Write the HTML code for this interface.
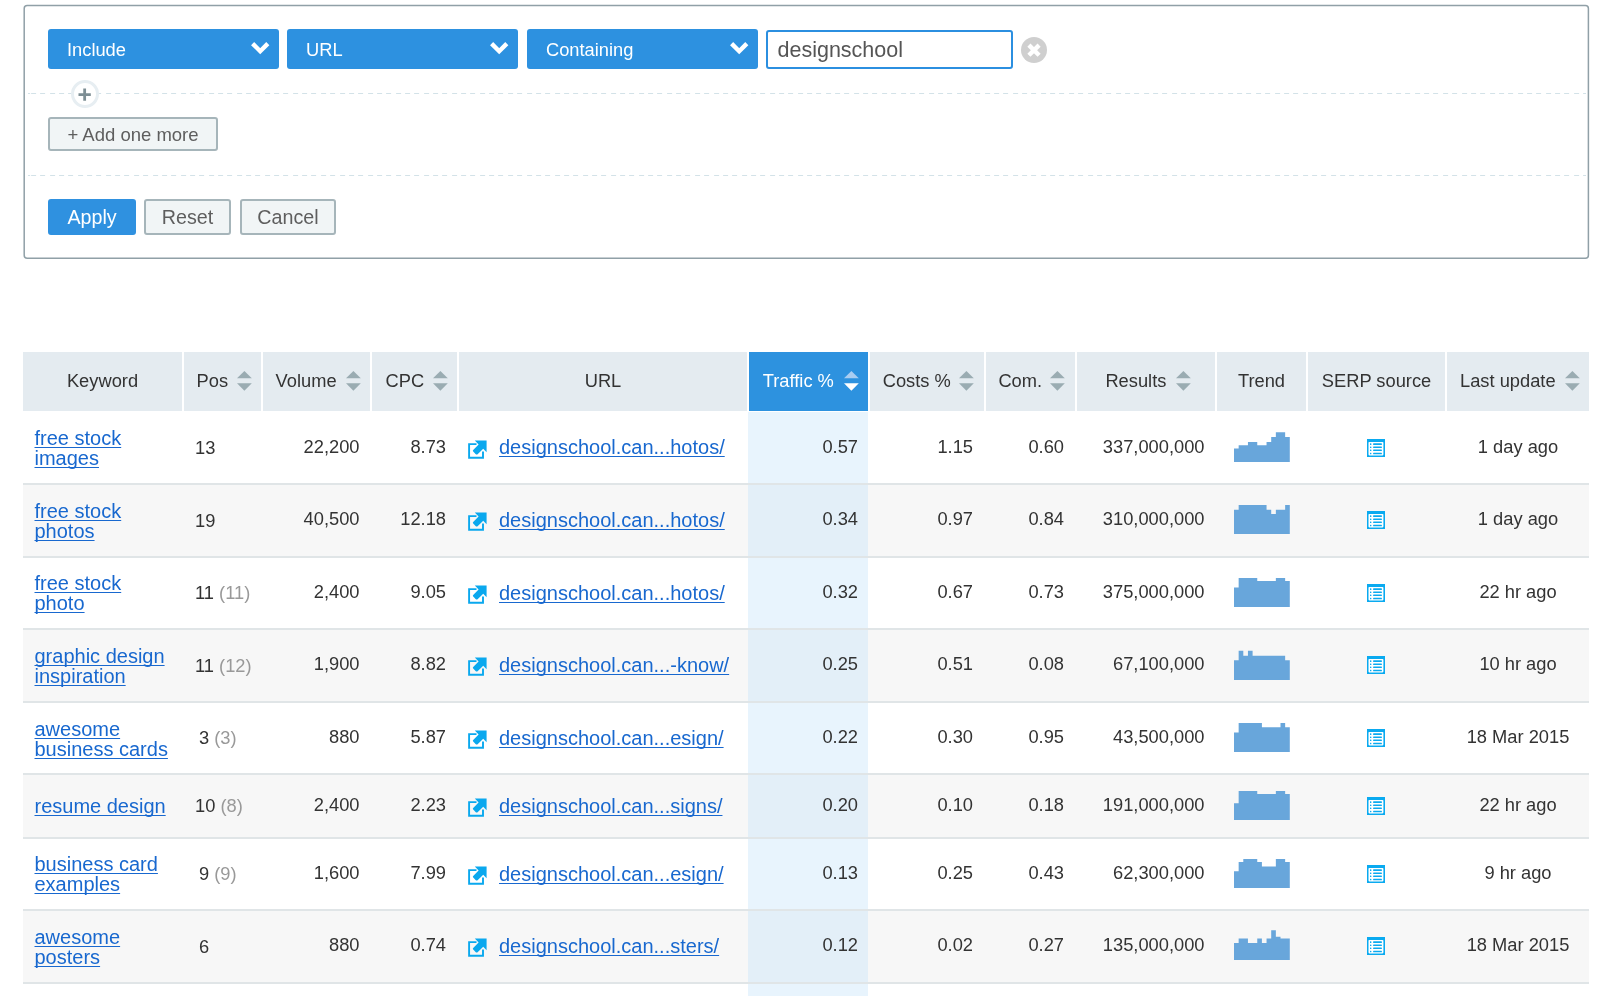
<!DOCTYPE html><html><head><meta charset="utf-8"><title>Filter</title><style>
*{box-sizing:border-box;margin:0;padding:0}
.wrap{position:absolute;left:0;top:0;width:1600px;height:996px;will-change:transform}
html,body{width:1600px;height:996px;overflow:hidden;background:#fff;font-family:"Liberation Sans",sans-serif;color:#333}
.abs{position:absolute}
.fbox{position:absolute;left:0;top:0}
.dd{position:absolute;top:29px;height:40px;background:#2d91e0;border-radius:3px;color:#fff;font-size:18.3px;line-height:41px;padding-left:19px}
.dd svg{position:absolute;right:9px;top:13px}
.inp{position:absolute;left:766px;top:29.6px;width:247px;height:39.4px;border:2px solid #2b8fe0;border-radius:3px;font-size:21.5px;line-height:37.6px;padding-left:9.5px;color:#555}
.clr{position:absolute;left:1021px;top:37px;width:26px;height:26px}
.dash{position:absolute;left:28px;width:1558px;height:1.6px;background:repeating-linear-gradient(90deg,#d3e2e8 0,#d3e2e8 5px,transparent 5px,transparent 9.35px);background-position:3.1px 0}
.plus{position:absolute;left:70.8px;top:80px;width:28.2px;height:28.2px;border-radius:50%;background:#fff;border:3px solid #e7eef2}
.btn{position:absolute;height:35px;border:2px solid #a6b5ba;background:#f1f5f6;border-radius:3px;color:#5e5e5e;font-size:19.7px;text-align:center}
.bprim{background:#2f91e0;border-color:#2f91e0;color:#fff}
.hd{position:absolute;top:352px;height:58.5px;background:#e4ebf0;display:flex;align-items:center;justify-content:center;font-size:18.3px;color:#333;white-space:nowrap}
.hd.act{background:#2d92df;color:#fff}
.hd .ht{position:absolute;top:0;line-height:58.5px}
.hd .ha{position:absolute;top:18.7px;height:20px}
.hd .sa{display:block}
.row{position:absolute;left:23px;width:1566px}
.rb{position:absolute;left:23px;width:1566px;height:2px;background:#e0e5e7}
.cell{position:absolute;display:flex;align-items:center;white-space:nowrap;font-size:18.3px;color:#333}
.r{justify-content:flex-end}
.c{justify-content:center}
a{color:#1868cf;text-decoration:underline;text-decoration-thickness:1.2px;text-underline-offset:1.5px;text-decoration-skip-ink:none}
.kw{font-size:20px;line-height:20px;white-space:normal;position:relative;top:1px}
.u{font-size:20px;position:relative;top:0.5px}
.ext{margin-right:11px;flex:none;position:relative;top:2.3px}
.gr{color:#999}
</style></head><body><div class="wrap">
<svg class="fbox" width="1600" height="270"><rect x="24.2" y="5.4" width="1564.2" height="252.9" rx="3" fill="none" stroke="#90a0a7" stroke-width="1.5"/></svg>
<div class="dd" style="left:48px;width:231px">Include<svg width="19" height="14" viewBox="0 0 19 14"><path d="M1.6 1.6 L9.2 9.2 L16.8 1.6" fill="none" stroke="#fff" stroke-width="4.4" stroke-linecap="butt" stroke-linejoin="miter"/></svg></div>
<div class="dd" style="left:287px;width:231px">URL<svg width="19" height="14" viewBox="0 0 19 14"><path d="M1.6 1.6 L9.2 9.2 L16.8 1.6" fill="none" stroke="#fff" stroke-width="4.4" stroke-linecap="butt" stroke-linejoin="miter"/></svg></div>
<div class="dd" style="left:527px;width:231px">Containing<svg width="19" height="14" viewBox="0 0 19 14"><path d="M1.6 1.6 L9.2 9.2 L16.8 1.6" fill="none" stroke="#fff" stroke-width="4.4" stroke-linecap="butt" stroke-linejoin="miter"/></svg></div>
<div class="inp">designschool</div>
<svg class="clr" viewBox="0 0 26 26"><circle cx="13" cy="13" r="13" fill="#cfcfcf"/><path d="M7.9 8.1 L18.1 18.3 M18.1 8.1 L7.9 18.3" stroke="#fff" stroke-width="4.4"/></svg>
<div class="dash" style="top:92.5px"></div>
<div class="dash" style="top:174.5px"></div>
<div class="plus"><svg width="24" height="24" viewBox="0 0 24 24" style="position:absolute;left:-0.5px;top:-0.5px"><path d="M11.65 5.5 V17.7 M5.5 11.6 H17.8" stroke="#7d8e94" stroke-width="2.8"/></svg></div>
<div class="btn" style="left:48px;top:117px;width:170px;height:34px;line-height:31px;font-size:18.5px">+ Add one more</div>
<div class="btn bprim" style="left:48px;top:199px;width:88px;height:36px;line-height:33.5px">Apply</div>
<div class="btn" style="left:144px;top:199px;width:87px;height:36px;line-height:33.5px">Reset</div>
<div class="btn" style="left:240px;top:199px;width:96px;height:36px;line-height:33.5px">Cancel</div>
<div class="abs" style="left:747.5px;top:411.6px;width:120.5px;height:586px;background:#e8f4fd"></div>
<div class="hd" style="left:23px;width:159px">Keyword</div>
<div class="hd" style="left:184px;width:77px"><span class="ht" style="left:12.60px">Pos</span><span class="ha" style="left:53.00px"><svg class="sa" width="15" height="20" viewBox="0 0 15 20"><path d="M7.4 0 L14.8 7.3 L0 7.3Z" fill="#9aacb2"/><path d="M0 12.3 L14.8 12.3 L7.4 19.7Z" fill="#9aacb2"/></svg></span></div>
<div class="hd" style="left:263px;width:107px"><span class="ht" style="left:12.60px">Volume</span><span class="ha" style="left:83.00px"><svg class="sa" width="15" height="20" viewBox="0 0 15 20"><path d="M7.4 0 L14.8 7.3 L0 7.3Z" fill="#9aacb2"/><path d="M0 12.3 L14.8 12.3 L7.4 19.7Z" fill="#9aacb2"/></svg></span></div>
<div class="hd" style="left:372px;width:85px"><span class="ht" style="left:13.60px">CPC</span><span class="ha" style="left:60.60px"><svg class="sa" width="15" height="20" viewBox="0 0 15 20"><path d="M7.4 0 L14.8 7.3 L0 7.3Z" fill="#9aacb2"/><path d="M0 12.3 L14.8 12.3 L7.4 19.7Z" fill="#9aacb2"/></svg></span></div>
<div class="hd" style="left:459px;width:288px">URL</div>
<div class="hd act" style="left:749px;width:119px"><span class="ht" style="left:13.75px">Traffic %</span><span class="ha" style="left:94.50px"><svg class="sa" width="15" height="20" viewBox="0 0 15 20"><path d="M7.4 0 L14.8 7.3 L0 7.3Z" fill="#a9cdf1"/><path d="M0 12.3 L14.8 12.3 L7.4 19.7Z" fill="#ffffff"/></svg></span></div>
<div class="hd" style="left:870px;width:114px"><span class="ht" style="left:12.70px">Costs %</span><span class="ha" style="left:89.40px"><svg class="sa" width="15" height="20" viewBox="0 0 15 20"><path d="M7.4 0 L14.8 7.3 L0 7.3Z" fill="#9aacb2"/><path d="M0 12.3 L14.8 12.3 L7.4 19.7Z" fill="#9aacb2"/></svg></span></div>
<div class="hd" style="left:986px;width:89px"><span class="ht" style="left:12.40px">Com.</span><span class="ha" style="left:64.20px"><svg class="sa" width="15" height="20" viewBox="0 0 15 20"><path d="M7.4 0 L14.8 7.3 L0 7.3Z" fill="#9aacb2"/><path d="M0 12.3 L14.8 12.3 L7.4 19.7Z" fill="#9aacb2"/></svg></span></div>
<div class="hd" style="left:1077px;width:138px"><span class="ht" style="left:28.40px">Results</span><span class="ha" style="left:98.80px"><svg class="sa" width="15" height="20" viewBox="0 0 15 20"><path d="M7.4 0 L14.8 7.3 L0 7.3Z" fill="#9aacb2"/><path d="M0 12.3 L14.8 12.3 L7.4 19.7Z" fill="#9aacb2"/></svg></span></div>
<div class="hd" style="left:1217px;width:89px">Trend</div>
<div class="hd" style="left:1308px;width:137px">SERP source</div>
<div class="hd" style="left:1447px;width:142px"><span class="ht" style="left:13.00px">Last update</span><span class="ha" style="left:118.00px"><svg class="sa" width="15" height="20" viewBox="0 0 15 20"><path d="M7.4 0 L14.8 7.3 L0 7.3Z" fill="#9aacb2"/><path d="M0 12.3 L14.8 12.3 L7.4 19.7Z" fill="#9aacb2"/></svg></span></div>
<div class="rb" style="top:483px"></div>
<div class="cell " style="left:34.5px;width:147.5px;top:417.33px;height:60px"><a class="kw">free stock<br>images</a></div>
<div class="cell " style="left:195px;width:66px;top:418.08px;height:60px"><span>13</span></div>
<div class="cell r" style="left:263px;width:96.5px;top:416.58px;height:60px">22,200</div>
<div class="cell r" style="left:372px;width:74px;top:416.58px;height:60px">8.73</div>
<div class="cell " style="left:468px;width:279px;top:417.43px;height:60px"><svg class="ext" width="20" height="20" viewBox="0 0 20 20"><path d="M8.5 4.1 H1.1 V17.8 H15 V11.5" fill="none" stroke="#0aa8ee" stroke-width="1.9" stroke-linejoin="miter"/><path d="M6.8 0.4 H18.6 V12.2 L15.2 8.8 L9.6 14.2 Q8.6 15 7.8 14.2 L5.2 11.6 Q4.4 10.8 5.2 10 L10.6 4.4 Z" fill="#0aa8ee"/></svg><a class="u">designschool.can...hotos/</a></div>
<div class="cell r" style="left:749px;width:109px;top:416.58px;height:60px">0.57</div>
<div class="cell r" style="left:870px;width:103px;top:416.58px;height:60px">1.15</div>
<div class="cell r" style="left:986px;width:78px;top:416.58px;height:60px">0.60</div>
<div class="cell r" style="left:1077px;width:127.5px;top:416.58px;height:60px">337,000,000</div>
<div class="cell c" style="left:1217px;width:89px;top:416.43px;height:60px"><svg class="trend" width="56" height="31" viewBox="0 0 56 31" style="position:relative;left:0.3px;top:0px"><path d="M0.00 31.00 L0.00 17.43 L4.65 17.43 L4.65 14.27 L9.30 14.27 L9.30 14.27 L13.95 14.27 L13.95 11.01 L18.60 11.01 L18.60 11.01 L23.25 11.01 L23.25 14.27 L27.90 14.27 L27.90 14.27 L32.55 14.27 L32.55 11.01 L37.20 11.01 L37.20 6.01 L41.85 6.01 L41.85 1.32 L46.50 1.32 L46.50 1.32 L51.15 1.32 L51.15 6.01 L55.80 6.01 L55.80 31.00Z" fill="#68a6db"/></svg></div>
<div class="cell c" style="left:1308px;width:136px;top:417.83px;height:60px"><svg class="serp" width="18" height="18" viewBox="0 0 18 18"><rect x="0" y="0" width="18" height="18" fill="#0aaaf0"/><rect x="1.5" y="2.9" width="14.9" height="13.5" fill="#fff" rx="0.8"/><g fill="#0aaaf0"><rect x="3" y="4.3" width="1.4" height="1.6" rx="0.5"/><rect x="6.1" y="4.3" width="8.8" height="1.6" rx="0.5"/><rect x="3" y="7.5" width="1.4" height="1.6" rx="0.5"/><rect x="6.1" y="7.5" width="8.8" height="1.6" rx="0.5"/><rect x="3" y="10.5" width="1.4" height="1.6" rx="0.5"/><rect x="6.1" y="10.5" width="8.8" height="1.6" rx="0.5"/><rect x="3" y="13.7" width="1.4" height="1.6" rx="0.5"/><rect x="6.1" y="13.7" width="8.8" height="1.6" rx="0.5"/></g></svg></div>
<div class="cell c" style="left:1447px;width:142px;top:416.58px;height:60px">1 day ago</div>
<div class="row" style="top:485px;height:71px;background:#f7f7f7"></div>
<div class="abs" style="left:747.5px;top:485px;width:120.5px;height:71px;background:#e3eff8"></div>
<div class="rb" style="top:556px"></div>
<div class="cell " style="left:34.5px;width:147.5px;top:489.88px;height:60px"><a class="kw">free stock<br>photos</a></div>
<div class="cell " style="left:195px;width:66px;top:490.62px;height:60px"><span>19</span></div>
<div class="cell r" style="left:263px;width:96.5px;top:489.12px;height:60px">40,500</div>
<div class="cell r" style="left:372px;width:74px;top:489.12px;height:60px">12.18</div>
<div class="cell " style="left:468px;width:279px;top:489.98px;height:60px"><svg class="ext" width="20" height="20" viewBox="0 0 20 20"><path d="M8.5 4.1 H1.1 V17.8 H15 V11.5" fill="none" stroke="#0aa8ee" stroke-width="1.9" stroke-linejoin="miter"/><path d="M6.8 0.4 H18.6 V12.2 L15.2 8.8 L9.6 14.2 Q8.6 15 7.8 14.2 L5.2 11.6 Q4.4 10.8 5.2 10 L10.6 4.4 Z" fill="#0aa8ee"/></svg><a class="u">designschool.can...hotos/</a></div>
<div class="cell r" style="left:749px;width:109px;top:489.12px;height:60px">0.34</div>
<div class="cell r" style="left:870px;width:103px;top:489.12px;height:60px">0.97</div>
<div class="cell r" style="left:986px;width:78px;top:489.12px;height:60px">0.84</div>
<div class="cell r" style="left:1077px;width:127.5px;top:489.12px;height:60px">310,000,000</div>
<div class="cell c" style="left:1217px;width:89px;top:488.98px;height:60px"><svg class="trend" width="56" height="31" viewBox="0 0 56 31" style="position:relative;left:0.3px;top:0px"><path d="M0.00 31.00 L0.00 6.83 L4.65 6.83 L4.65 1.93 L9.30 1.93 L9.30 1.93 L13.95 1.93 L13.95 1.93 L18.60 1.93 L18.60 1.93 L23.25 1.93 L23.25 1.93 L27.90 1.93 L27.90 1.93 L32.55 1.93 L32.55 6.83 L37.20 6.83 L37.20 11.01 L41.85 11.01 L41.85 6.83 L46.50 6.83 L46.50 6.83 L51.15 6.83 L51.15 1.93 L55.80 1.93 L55.80 31.00Z" fill="#68a6db"/></svg></div>
<div class="cell c" style="left:1308px;width:136px;top:490.38px;height:60px"><svg class="serp" width="18" height="18" viewBox="0 0 18 18"><rect x="0" y="0" width="18" height="18" fill="#0aaaf0"/><rect x="1.5" y="2.9" width="14.9" height="13.5" fill="#fff" rx="0.8"/><g fill="#0aaaf0"><rect x="3" y="4.3" width="1.4" height="1.6" rx="0.5"/><rect x="6.1" y="4.3" width="8.8" height="1.6" rx="0.5"/><rect x="3" y="7.5" width="1.4" height="1.6" rx="0.5"/><rect x="6.1" y="7.5" width="8.8" height="1.6" rx="0.5"/><rect x="3" y="10.5" width="1.4" height="1.6" rx="0.5"/><rect x="6.1" y="10.5" width="8.8" height="1.6" rx="0.5"/><rect x="3" y="13.7" width="1.4" height="1.6" rx="0.5"/><rect x="6.1" y="13.7" width="8.8" height="1.6" rx="0.5"/></g></svg></div>
<div class="cell c" style="left:1447px;width:142px;top:489.12px;height:60px">1 day ago</div>
<div class="rb" style="top:628px"></div>
<div class="cell " style="left:34.5px;width:147.5px;top:562.43px;height:60px"><a class="kw">free stock<br>photo</a></div>
<div class="cell " style="left:195px;width:66px;top:563.18px;height:60px"><span>11 <span class="gr">(11)</span></span></div>
<div class="cell r" style="left:263px;width:96.5px;top:561.68px;height:60px">2,400</div>
<div class="cell r" style="left:372px;width:74px;top:561.68px;height:60px">9.05</div>
<div class="cell " style="left:468px;width:279px;top:562.53px;height:60px"><svg class="ext" width="20" height="20" viewBox="0 0 20 20"><path d="M8.5 4.1 H1.1 V17.8 H15 V11.5" fill="none" stroke="#0aa8ee" stroke-width="1.9" stroke-linejoin="miter"/><path d="M6.8 0.4 H18.6 V12.2 L15.2 8.8 L9.6 14.2 Q8.6 15 7.8 14.2 L5.2 11.6 Q4.4 10.8 5.2 10 L10.6 4.4 Z" fill="#0aa8ee"/></svg><a class="u">designschool.can...hotos/</a></div>
<div class="cell r" style="left:749px;width:109px;top:561.68px;height:60px">0.32</div>
<div class="cell r" style="left:870px;width:103px;top:561.68px;height:60px">0.67</div>
<div class="cell r" style="left:986px;width:78px;top:561.68px;height:60px">0.73</div>
<div class="cell r" style="left:1077px;width:127.5px;top:561.68px;height:60px">375,000,000</div>
<div class="cell c" style="left:1217px;width:89px;top:561.53px;height:60px"><svg class="trend" width="56" height="31" viewBox="0 0 56 31" style="position:relative;left:0.3px;top:0px"><path d="M0.00 31.00 L0.00 11.42 L4.65 11.42 L4.65 1.93 L9.30 1.93 L9.30 1.93 L13.95 1.93 L13.95 1.93 L18.60 1.93 L18.60 1.93 L23.25 1.93 L23.25 4.99 L27.90 4.99 L27.90 4.99 L32.55 4.99 L32.55 4.99 L37.20 4.99 L37.20 4.99 L41.85 4.99 L41.85 1.93 L46.50 1.93 L46.50 1.93 L51.15 1.93 L51.15 4.99 L55.80 4.99 L55.80 31.00Z" fill="#68a6db"/></svg></div>
<div class="cell c" style="left:1308px;width:136px;top:562.93px;height:60px"><svg class="serp" width="18" height="18" viewBox="0 0 18 18"><rect x="0" y="0" width="18" height="18" fill="#0aaaf0"/><rect x="1.5" y="2.9" width="14.9" height="13.5" fill="#fff" rx="0.8"/><g fill="#0aaaf0"><rect x="3" y="4.3" width="1.4" height="1.6" rx="0.5"/><rect x="6.1" y="4.3" width="8.8" height="1.6" rx="0.5"/><rect x="3" y="7.5" width="1.4" height="1.6" rx="0.5"/><rect x="6.1" y="7.5" width="8.8" height="1.6" rx="0.5"/><rect x="3" y="10.5" width="1.4" height="1.6" rx="0.5"/><rect x="6.1" y="10.5" width="8.8" height="1.6" rx="0.5"/><rect x="3" y="13.7" width="1.4" height="1.6" rx="0.5"/><rect x="6.1" y="13.7" width="8.8" height="1.6" rx="0.5"/></g></svg></div>
<div class="cell c" style="left:1447px;width:142px;top:561.68px;height:60px">22 hr ago</div>
<div class="row" style="top:630px;height:71px;background:#f7f7f7"></div>
<div class="abs" style="left:747.5px;top:630px;width:120.5px;height:71px;background:#e3eff8"></div>
<div class="rb" style="top:701px"></div>
<div class="cell " style="left:34.5px;width:147.5px;top:634.93px;height:60px"><a class="kw">graphic design<br>inspiration</a></div>
<div class="cell " style="left:195px;width:66px;top:635.68px;height:60px"><span>11 <span class="gr">(12)</span></span></div>
<div class="cell r" style="left:263px;width:96.5px;top:634.18px;height:60px">1,900</div>
<div class="cell r" style="left:372px;width:74px;top:634.18px;height:60px">8.82</div>
<div class="cell " style="left:468px;width:279px;top:635.03px;height:60px"><svg class="ext" width="20" height="20" viewBox="0 0 20 20"><path d="M8.5 4.1 H1.1 V17.8 H15 V11.5" fill="none" stroke="#0aa8ee" stroke-width="1.9" stroke-linejoin="miter"/><path d="M6.8 0.4 H18.6 V12.2 L15.2 8.8 L9.6 14.2 Q8.6 15 7.8 14.2 L5.2 11.6 Q4.4 10.8 5.2 10 L10.6 4.4 Z" fill="#0aa8ee"/></svg><a class="u">designschool.can...-know/</a></div>
<div class="cell r" style="left:749px;width:109px;top:634.18px;height:60px">0.25</div>
<div class="cell r" style="left:870px;width:103px;top:634.18px;height:60px">0.51</div>
<div class="cell r" style="left:986px;width:78px;top:634.18px;height:60px">0.08</div>
<div class="cell r" style="left:1077px;width:127.5px;top:634.18px;height:60px">67,100,000</div>
<div class="cell c" style="left:1217px;width:89px;top:634.03px;height:60px"><svg class="trend" width="56" height="31" viewBox="0 0 56 31" style="position:relative;left:0.3px;top:0px"><path d="M0.00 31.00 L0.00 11.21 L4.65 11.21 L4.65 1.83 L9.30 1.83 L9.30 6.72 L13.95 6.72 L13.95 1.83 L18.60 1.83 L18.60 6.72 L23.25 6.72 L23.25 6.72 L27.90 6.72 L27.90 6.72 L32.55 6.72 L32.55 6.72 L37.20 6.72 L37.20 6.72 L41.85 6.72 L41.85 6.72 L46.50 6.72 L46.50 6.72 L51.15 6.72 L51.15 11.21 L55.80 11.21 L55.80 31.00Z" fill="#68a6db"/></svg></div>
<div class="cell c" style="left:1308px;width:136px;top:635.43px;height:60px"><svg class="serp" width="18" height="18" viewBox="0 0 18 18"><rect x="0" y="0" width="18" height="18" fill="#0aaaf0"/><rect x="1.5" y="2.9" width="14.9" height="13.5" fill="#fff" rx="0.8"/><g fill="#0aaaf0"><rect x="3" y="4.3" width="1.4" height="1.6" rx="0.5"/><rect x="6.1" y="4.3" width="8.8" height="1.6" rx="0.5"/><rect x="3" y="7.5" width="1.4" height="1.6" rx="0.5"/><rect x="6.1" y="7.5" width="8.8" height="1.6" rx="0.5"/><rect x="3" y="10.5" width="1.4" height="1.6" rx="0.5"/><rect x="6.1" y="10.5" width="8.8" height="1.6" rx="0.5"/><rect x="3" y="13.7" width="1.4" height="1.6" rx="0.5"/><rect x="6.1" y="13.7" width="8.8" height="1.6" rx="0.5"/></g></svg></div>
<div class="cell c" style="left:1447px;width:142px;top:634.18px;height:60px">10 hr ago</div>
<div class="rb" style="top:773px"></div>
<div class="cell " style="left:34.5px;width:147.5px;top:707.52px;height:60px"><a class="kw">awesome<br>business cards</a></div>
<div class="cell " style="left:199px;width:62px;top:708.27px;height:60px"><span>3 <span class="gr">(3)</span></span></div>
<div class="cell r" style="left:263px;width:96.5px;top:706.77px;height:60px">880</div>
<div class="cell r" style="left:372px;width:74px;top:706.77px;height:60px">5.87</div>
<div class="cell " style="left:468px;width:279px;top:707.62px;height:60px"><svg class="ext" width="20" height="20" viewBox="0 0 20 20"><path d="M8.5 4.1 H1.1 V17.8 H15 V11.5" fill="none" stroke="#0aa8ee" stroke-width="1.9" stroke-linejoin="miter"/><path d="M6.8 0.4 H18.6 V12.2 L15.2 8.8 L9.6 14.2 Q8.6 15 7.8 14.2 L5.2 11.6 Q4.4 10.8 5.2 10 L10.6 4.4 Z" fill="#0aa8ee"/></svg><a class="u">designschool.can...esign/</a></div>
<div class="cell r" style="left:749px;width:109px;top:706.77px;height:60px">0.22</div>
<div class="cell r" style="left:870px;width:103px;top:706.77px;height:60px">0.30</div>
<div class="cell r" style="left:986px;width:78px;top:706.77px;height:60px">0.95</div>
<div class="cell r" style="left:1077px;width:127.5px;top:706.77px;height:60px">43,500,000</div>
<div class="cell c" style="left:1217px;width:89px;top:706.62px;height:60px"><svg class="trend" width="56" height="31" viewBox="0 0 56 31" style="position:relative;left:0.3px;top:0px"><path d="M0.00 31.00 L0.00 11.42 L4.65 11.42 L4.65 1.93 L9.30 1.93 L9.30 1.93 L13.95 1.93 L13.95 1.93 L18.60 1.93 L18.60 1.93 L23.25 1.93 L23.25 1.93 L27.90 1.93 L27.90 6.32 L32.55 6.32 L32.55 6.32 L37.20 6.32 L37.20 6.32 L41.85 6.32 L41.85 6.32 L46.50 6.32 L46.50 1.93 L51.15 1.93 L51.15 6.32 L55.80 6.32 L55.80 31.00Z" fill="#68a6db"/></svg></div>
<div class="cell c" style="left:1308px;width:136px;top:708.02px;height:60px"><svg class="serp" width="18" height="18" viewBox="0 0 18 18"><rect x="0" y="0" width="18" height="18" fill="#0aaaf0"/><rect x="1.5" y="2.9" width="14.9" height="13.5" fill="#fff" rx="0.8"/><g fill="#0aaaf0"><rect x="3" y="4.3" width="1.4" height="1.6" rx="0.5"/><rect x="6.1" y="4.3" width="8.8" height="1.6" rx="0.5"/><rect x="3" y="7.5" width="1.4" height="1.6" rx="0.5"/><rect x="6.1" y="7.5" width="8.8" height="1.6" rx="0.5"/><rect x="3" y="10.5" width="1.4" height="1.6" rx="0.5"/><rect x="6.1" y="10.5" width="8.8" height="1.6" rx="0.5"/><rect x="3" y="13.7" width="1.4" height="1.6" rx="0.5"/><rect x="6.1" y="13.7" width="8.8" height="1.6" rx="0.5"/></g></svg></div>
<div class="cell c" style="left:1447px;width:142px;top:706.77px;height:60px">18 Mar 2015</div>
<div class="row" style="top:775px;height:62px;background:#f7f7f7"></div>
<div class="abs" style="left:747.5px;top:775px;width:120.5px;height:62px;background:#e3eff8"></div>
<div class="rb" style="top:837px"></div>
<div class="cell " style="left:34.5px;width:147.5px;top:775.45px;height:60px"><a class="kw">resume design</a></div>
<div class="cell " style="left:195px;width:66px;top:776.20px;height:60px"><span>10 <span class="gr">(8)</span></span></div>
<div class="cell r" style="left:263px;width:96.5px;top:774.70px;height:60px">2,400</div>
<div class="cell r" style="left:372px;width:74px;top:774.70px;height:60px">2.23</div>
<div class="cell " style="left:468px;width:279px;top:775.55px;height:60px"><svg class="ext" width="20" height="20" viewBox="0 0 20 20"><path d="M8.5 4.1 H1.1 V17.8 H15 V11.5" fill="none" stroke="#0aa8ee" stroke-width="1.9" stroke-linejoin="miter"/><path d="M6.8 0.4 H18.6 V12.2 L15.2 8.8 L9.6 14.2 Q8.6 15 7.8 14.2 L5.2 11.6 Q4.4 10.8 5.2 10 L10.6 4.4 Z" fill="#0aa8ee"/></svg><a class="u">designschool.can...signs/</a></div>
<div class="cell r" style="left:749px;width:109px;top:774.70px;height:60px">0.20</div>
<div class="cell r" style="left:870px;width:103px;top:774.70px;height:60px">0.10</div>
<div class="cell r" style="left:986px;width:78px;top:774.70px;height:60px">0.18</div>
<div class="cell r" style="left:1077px;width:127.5px;top:774.70px;height:60px">191,000,000</div>
<div class="cell c" style="left:1217px;width:89px;top:774.55px;height:60px"><svg class="trend" width="56" height="31" viewBox="0 0 56 31" style="position:relative;left:0.3px;top:0px"><path d="M0.00 31.00 L0.00 14.37 L4.65 14.37 L4.65 1.93 L9.30 1.93 L9.30 1.93 L13.95 1.93 L13.95 1.93 L18.60 1.93 L18.60 1.93 L23.25 1.93 L23.25 4.99 L27.90 4.99 L27.90 4.99 L32.55 4.99 L32.55 4.99 L37.20 4.99 L37.20 4.99 L41.85 4.99 L41.85 1.93 L46.50 1.93 L46.50 1.93 L51.15 1.93 L51.15 4.99 L55.80 4.99 L55.80 31.00Z" fill="#68a6db"/></svg></div>
<div class="cell c" style="left:1308px;width:136px;top:775.95px;height:60px"><svg class="serp" width="18" height="18" viewBox="0 0 18 18"><rect x="0" y="0" width="18" height="18" fill="#0aaaf0"/><rect x="1.5" y="2.9" width="14.9" height="13.5" fill="#fff" rx="0.8"/><g fill="#0aaaf0"><rect x="3" y="4.3" width="1.4" height="1.6" rx="0.5"/><rect x="6.1" y="4.3" width="8.8" height="1.6" rx="0.5"/><rect x="3" y="7.5" width="1.4" height="1.6" rx="0.5"/><rect x="6.1" y="7.5" width="8.8" height="1.6" rx="0.5"/><rect x="3" y="10.5" width="1.4" height="1.6" rx="0.5"/><rect x="6.1" y="10.5" width="8.8" height="1.6" rx="0.5"/><rect x="3" y="13.7" width="1.4" height="1.6" rx="0.5"/><rect x="6.1" y="13.7" width="8.8" height="1.6" rx="0.5"/></g></svg></div>
<div class="cell c" style="left:1447px;width:142px;top:774.70px;height:60px">22 hr ago</div>
<div class="rb" style="top:909px"></div>
<div class="cell " style="left:34.5px;width:147.5px;top:843.43px;height:60px"><a class="kw">business card<br>examples</a></div>
<div class="cell " style="left:199px;width:62px;top:844.18px;height:60px"><span>9 <span class="gr">(9)</span></span></div>
<div class="cell r" style="left:263px;width:96.5px;top:842.68px;height:60px">1,600</div>
<div class="cell r" style="left:372px;width:74px;top:842.68px;height:60px">7.99</div>
<div class="cell " style="left:468px;width:279px;top:843.53px;height:60px"><svg class="ext" width="20" height="20" viewBox="0 0 20 20"><path d="M8.5 4.1 H1.1 V17.8 H15 V11.5" fill="none" stroke="#0aa8ee" stroke-width="1.9" stroke-linejoin="miter"/><path d="M6.8 0.4 H18.6 V12.2 L15.2 8.8 L9.6 14.2 Q8.6 15 7.8 14.2 L5.2 11.6 Q4.4 10.8 5.2 10 L10.6 4.4 Z" fill="#0aa8ee"/></svg><a class="u">designschool.can...esign/</a></div>
<div class="cell r" style="left:749px;width:109px;top:842.68px;height:60px">0.13</div>
<div class="cell r" style="left:870px;width:103px;top:842.68px;height:60px">0.25</div>
<div class="cell r" style="left:986px;width:78px;top:842.68px;height:60px">0.43</div>
<div class="cell r" style="left:1077px;width:127.5px;top:842.68px;height:60px">62,300,000</div>
<div class="cell c" style="left:1217px;width:89px;top:842.53px;height:60px"><svg class="trend" width="56" height="31" viewBox="0 0 56 31" style="position:relative;left:0.3px;top:0px"><path d="M0.00 31.00 L0.00 14.37 L4.65 14.37 L4.65 5.09 L9.30 5.09 L9.30 1.93 L13.95 1.93 L13.95 1.93 L18.60 1.93 L18.60 1.93 L23.25 1.93 L23.25 5.09 L27.90 5.09 L27.90 9.38 L32.55 9.38 L32.55 9.38 L37.20 9.38 L37.20 9.38 L41.85 9.38 L41.85 1.93 L46.50 1.93 L46.50 1.93 L51.15 1.93 L51.15 5.09 L55.80 5.09 L55.80 31.00Z" fill="#68a6db"/></svg></div>
<div class="cell c" style="left:1308px;width:136px;top:843.93px;height:60px"><svg class="serp" width="18" height="18" viewBox="0 0 18 18"><rect x="0" y="0" width="18" height="18" fill="#0aaaf0"/><rect x="1.5" y="2.9" width="14.9" height="13.5" fill="#fff" rx="0.8"/><g fill="#0aaaf0"><rect x="3" y="4.3" width="1.4" height="1.6" rx="0.5"/><rect x="6.1" y="4.3" width="8.8" height="1.6" rx="0.5"/><rect x="3" y="7.5" width="1.4" height="1.6" rx="0.5"/><rect x="6.1" y="7.5" width="8.8" height="1.6" rx="0.5"/><rect x="3" y="10.5" width="1.4" height="1.6" rx="0.5"/><rect x="6.1" y="10.5" width="8.8" height="1.6" rx="0.5"/><rect x="3" y="13.7" width="1.4" height="1.6" rx="0.5"/><rect x="6.1" y="13.7" width="8.8" height="1.6" rx="0.5"/></g></svg></div>
<div class="cell c" style="left:1447px;width:142px;top:842.68px;height:60px">9 hr ago</div>
<div class="row" style="top:911px;height:71px;background:#f7f7f7"></div>
<div class="abs" style="left:747.5px;top:911px;width:120.5px;height:71px;background:#e3eff8"></div>
<div class="rb" style="top:982px"></div>
<div class="cell " style="left:34.5px;width:147.5px;top:915.83px;height:60px"><a class="kw">awesome<br>posters</a></div>
<div class="cell " style="left:199px;width:62px;top:916.58px;height:60px"><span>6</span></div>
<div class="cell r" style="left:263px;width:96.5px;top:915.08px;height:60px">880</div>
<div class="cell r" style="left:372px;width:74px;top:915.08px;height:60px">0.74</div>
<div class="cell " style="left:468px;width:279px;top:915.93px;height:60px"><svg class="ext" width="20" height="20" viewBox="0 0 20 20"><path d="M8.5 4.1 H1.1 V17.8 H15 V11.5" fill="none" stroke="#0aa8ee" stroke-width="1.9" stroke-linejoin="miter"/><path d="M6.8 0.4 H18.6 V12.2 L15.2 8.8 L9.6 14.2 Q8.6 15 7.8 14.2 L5.2 11.6 Q4.4 10.8 5.2 10 L10.6 4.4 Z" fill="#0aa8ee"/></svg><a class="u">designschool.can...sters/</a></div>
<div class="cell r" style="left:749px;width:109px;top:915.08px;height:60px">0.12</div>
<div class="cell r" style="left:870px;width:103px;top:915.08px;height:60px">0.02</div>
<div class="cell r" style="left:986px;width:78px;top:915.08px;height:60px">0.27</div>
<div class="cell r" style="left:1077px;width:127.5px;top:915.08px;height:60px">135,000,000</div>
<div class="cell c" style="left:1217px;width:89px;top:914.93px;height:60px"><svg class="trend" width="56" height="31" viewBox="0 0 56 31" style="position:relative;left:0.3px;top:0px"><path d="M0.00 31.00 L0.00 14.07 L4.65 14.07 L4.65 9.58 L9.30 9.58 L9.30 9.58 L13.95 9.58 L13.95 14.07 L18.60 14.07 L18.60 14.07 L23.25 14.07 L23.25 9.58 L27.90 9.58 L27.90 14.07 L32.55 14.07 L32.55 9.58 L37.20 9.58 L37.20 1.32 L41.85 1.32 L41.85 7.74 L46.50 7.74 L46.50 9.58 L51.15 9.58 L51.15 9.58 L55.80 9.58 L55.80 31.00Z" fill="#68a6db"/></svg></div>
<div class="cell c" style="left:1308px;width:136px;top:916.33px;height:60px"><svg class="serp" width="18" height="18" viewBox="0 0 18 18"><rect x="0" y="0" width="18" height="18" fill="#0aaaf0"/><rect x="1.5" y="2.9" width="14.9" height="13.5" fill="#fff" rx="0.8"/><g fill="#0aaaf0"><rect x="3" y="4.3" width="1.4" height="1.6" rx="0.5"/><rect x="6.1" y="4.3" width="8.8" height="1.6" rx="0.5"/><rect x="3" y="7.5" width="1.4" height="1.6" rx="0.5"/><rect x="6.1" y="7.5" width="8.8" height="1.6" rx="0.5"/><rect x="3" y="10.5" width="1.4" height="1.6" rx="0.5"/><rect x="6.1" y="10.5" width="8.8" height="1.6" rx="0.5"/><rect x="3" y="13.7" width="1.4" height="1.6" rx="0.5"/><rect x="6.1" y="13.7" width="8.8" height="1.6" rx="0.5"/></g></svg></div>
<div class="cell c" style="left:1447px;width:142px;top:915.08px;height:60px">18 Mar 2015</div>
</div></body></html>
